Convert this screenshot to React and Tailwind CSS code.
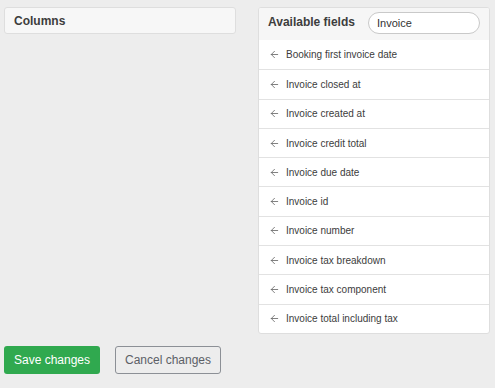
import { ArrowLeft } from 'lucide-react';

// Fields matching the current search
const FIELDS = [
  'Booking first invoice date',
  'Invoice closed at',
  'Invoice created at',
  'Invoice credit total',
  'Invoice due date',
  'Invoice id',
  'Invoice number',
  'Invoice tax breakdown',
  'Invoice tax component',
  'Invoice total including tax'
];

function App() {
  return (
    <div
      className="min-h-[388px] bg-[#ededed] pl-[4px] pr-[5px] pt-[7px] text-[#333]"
      style={{ fontFamily: '"Liberation Sans", Arial, sans-serif' }}
    >
      <div className="flex items-start gap-[22px]">
        {/* Columns */}
        <div className="w-[232px] rounded-[3px] border border-[#dedede] bg-[#f7f7f7]">
          <div className="flex h-[25px] items-center px-[9px] text-[12px] font-bold text-[#3d3d3d]">
            Columns
          </div>
        </div>

        {/* Available fields */}
        <div className="w-[232px] overflow-hidden rounded-[3px] border border-[#dedede] bg-white">
          <div className="flex h-[32px] items-start justify-between bg-[#f6f6f6] pl-[9px] pr-[9px]">
            <span className="mt-[5px] text-[12px] font-bold text-[#3d3d3d]">Available fields</span>
            <input
              defaultValue="Invoice"
              className="mt-[4px] h-[22px] w-[112px] rounded-full border border-[#c9c9c9] bg-white px-[8px] text-[11px] text-[#333] outline-none"
            />
          </div>
          {FIELDS.map((f, i) => (
            <div
              key={f}
              className={`flex h-[29.3px] items-center gap-[6px] pl-[10px] text-[10px] text-[#3c3c3c] ${
                i === 0 ? '' : 'border-t border-[#e2e2e2]'
              }`}
            >
              <ArrowLeft size={11} strokeWidth={1.8} className="text-[#666]" />
              <span>{f}</span>
            </div>
          ))}
        </div>
      </div>

      {/* 操作按钮 */}
      <div className="mt-[12px] flex items-center gap-[15px]">
        <button className="h-[28px] w-[96px] rounded-[3px] bg-[#30a94f] text-[12px] text-white">
          Save changes
        </button>
        <button className="h-[28px] w-[106px] rounded-[3px] border border-[#8c9096] text-[12px] text-[#5c6066]">
          Cancel changes
        </button>
      </div>
    </div>
  );
}

export default App;
